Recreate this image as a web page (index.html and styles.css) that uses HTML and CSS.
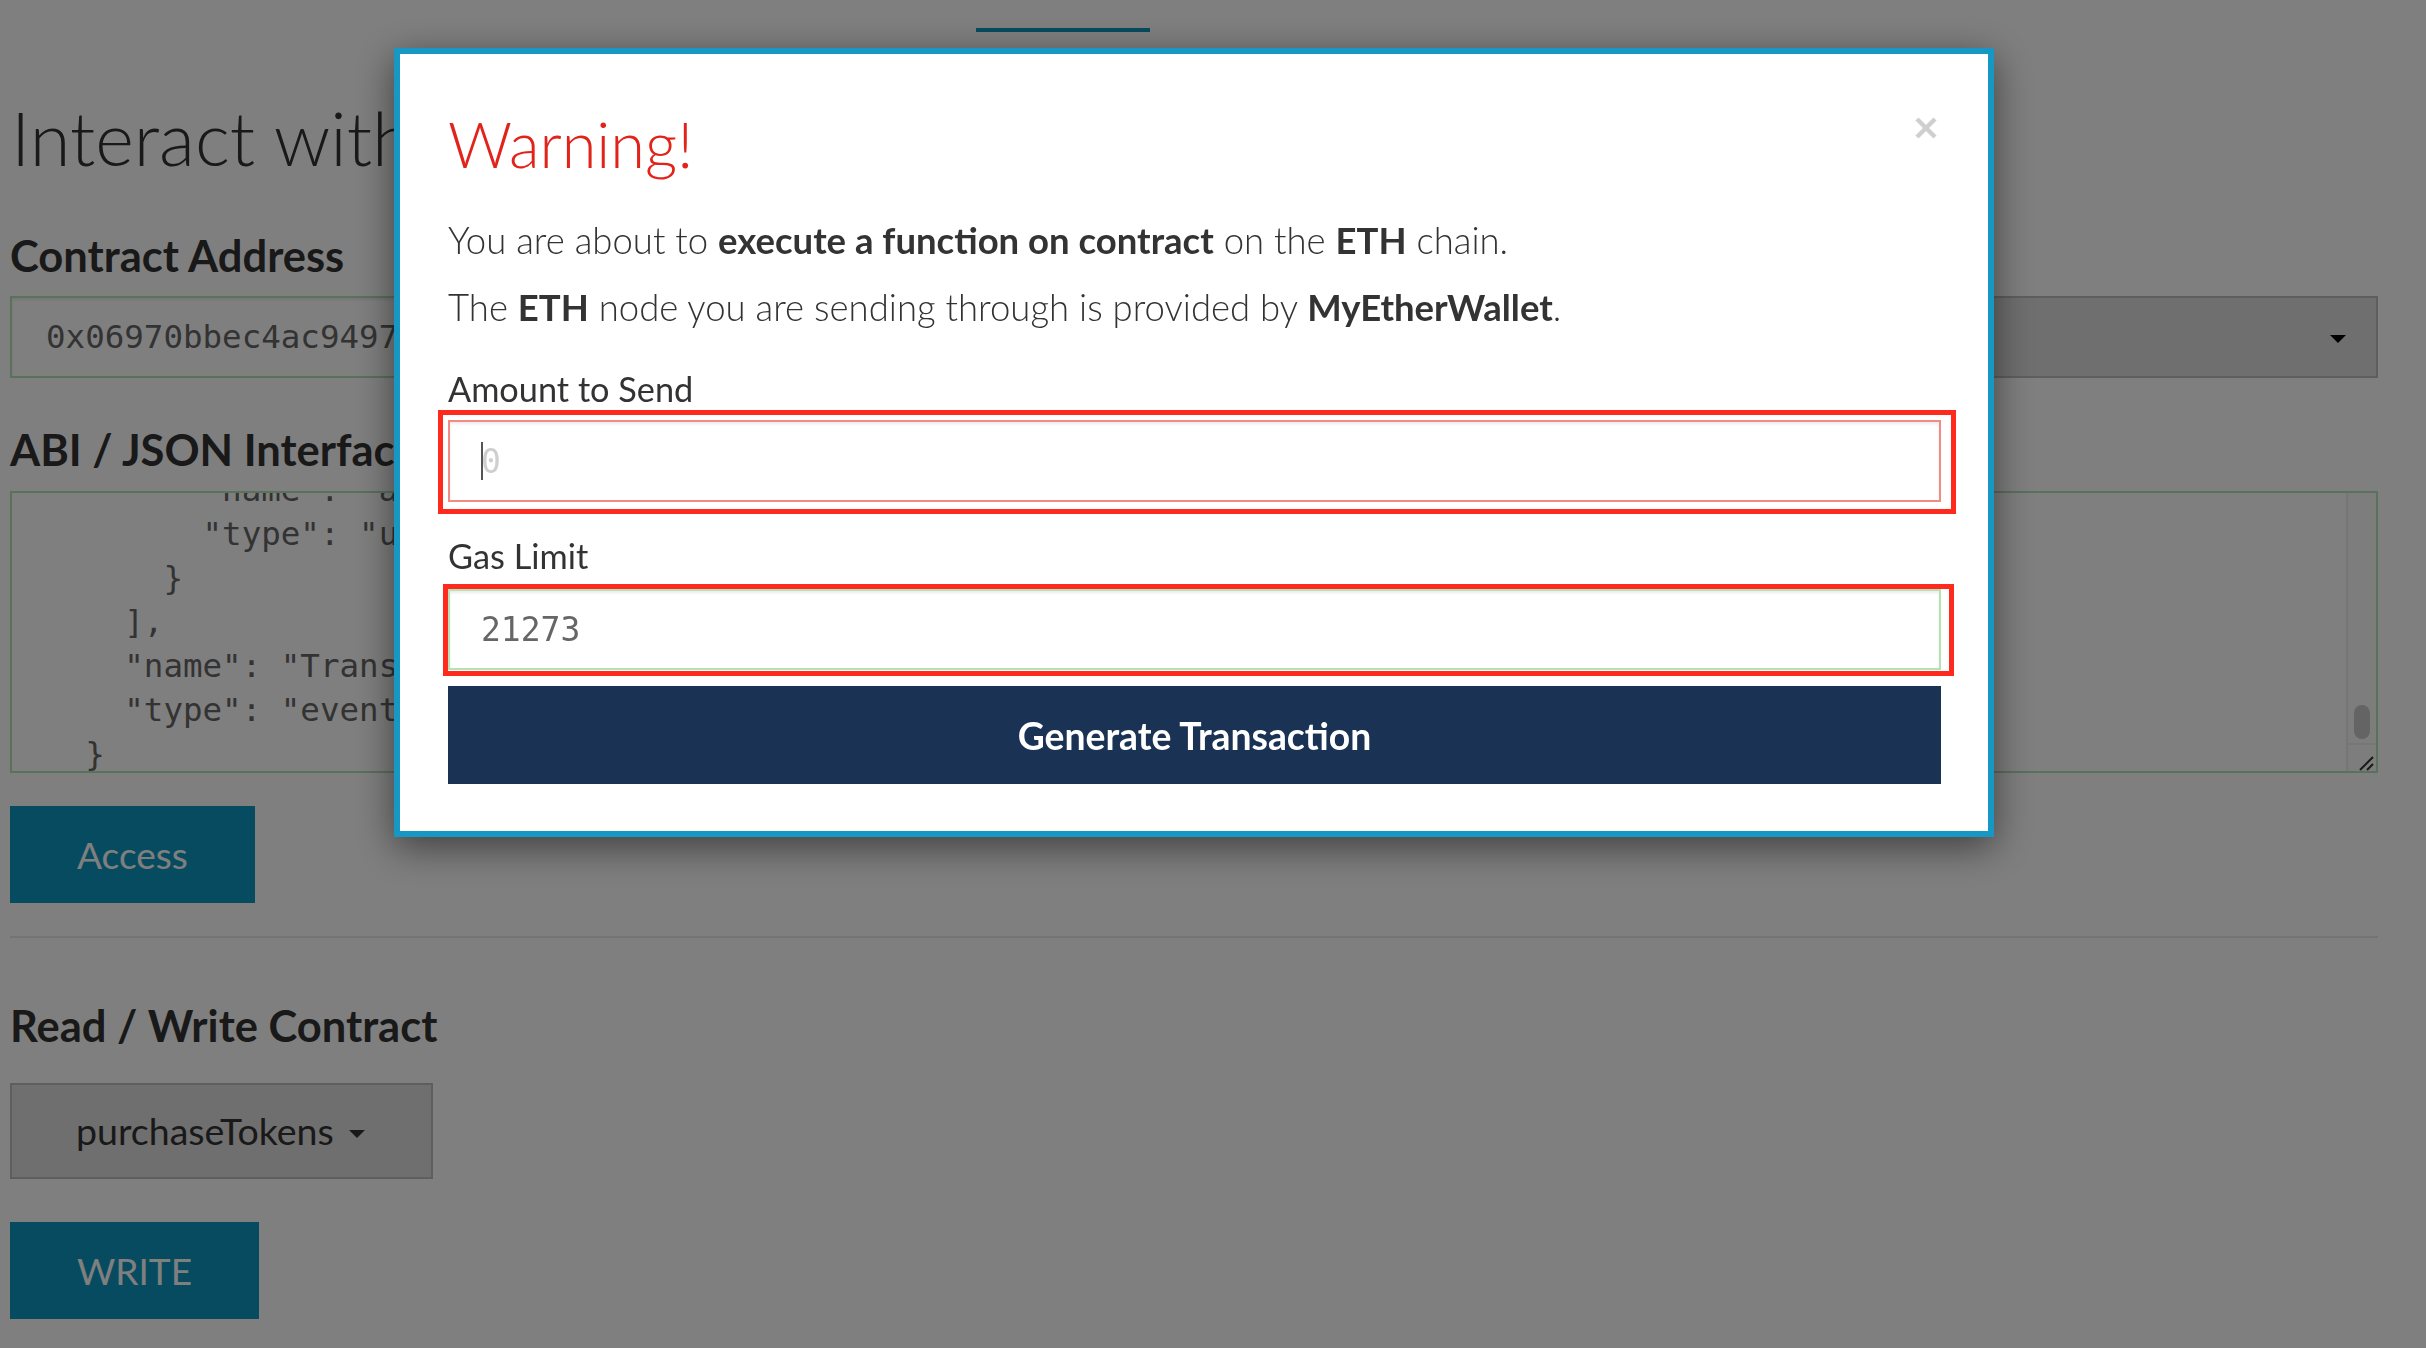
FILE: index.html
```html
<!DOCTYPE html>
<html lang="en">
<head>
<meta charset="utf-8">
<title>Interact with Contract</title>
<link rel="stylesheet" href="styles.css">
</head>
<body>
<div class="page">
  <nav class="tabs" aria-label="Sections"><span class="tab-active"></span></nav>
  <main class="content">
    <h1 class="page-title">Interact with Contract</h1>

    <h3 class="section-label label-address">Contract Address</h3>
    <div class="address-row">
      <input class="field field-page" value="0x06970bbec4ac94978dd05af5d6e5d2f82d5ac09f" readonly>
      <div class="select-box"><span class="select-caret"></span></div>
    </div>

    <h3 class="section-label label-abi">ABI / JSON Interface</h3>
    <div class="code-area">
      <div class="code-view">
<pre class="code">        "name": "amount",
        "type": "uint256"
      }
    ],
    "name": "Transfer",
    "type": "event"
  }
]</pre>
      </div>
      <div class="scroll-col">
        <div class="scroll-rail"><span class="scroll-thumb"></span></div>
        <div class="scroll-corner">
          <svg width="28" height="28" viewBox="0 0 28 28"><path d="M12 25 L25 12 M19 25 L25 19" stroke="#333" stroke-width="2" fill="none"/></svg>
        </div>
      </div>
    </div>

    <button class="btn-primary btn-access">Access</button>
    <hr class="divider">

    <h3 class="section-label label-rw">Read / Write Contract</h3>
    <div class="dropdown">purchaseTokens<span class="dropdown-caret"></span></div>
    <button class="btn-primary btn-write">WRITE</button>
  </main>
</div>

<div class="backdrop"></div>

<div class="modal" role="dialog" aria-labelledby="modal-title">
  <div class="modal-head">
    <h2 class="modal-title" id="modal-title">Warning!</h2>
    <button class="close" aria-label="Close">
      <svg width="22" height="22" viewBox="0 0 22 22"><path d="M2 2 L20 20 M20 2 L2 20" stroke="#cfcfcf" stroke-width="4.4" fill="none"/></svg>
    </button>
  </div>
  <p class="modal-text text-first">You are about to <strong>execute a function on contract</strong> on the <strong>ETH</strong> chain.</p>
  <p class="modal-text text-second">The <strong>ETH</strong> node you are sending through is provided by <strong>MyEtherWallet</strong>.</p>

  <label class="modal-label label-amount" for="amount">Amount to Send</label>
  <div class="annotated">
    <input id="amount" class="field field-error" placeholder="0">
    <span class="text-caret"></span>
    <span class="mark mark-amount"></span>
  </div>

  <label class="modal-label label-gas" for="gas">Gas Limit</label>
  <div class="annotated">
    <input id="gas" class="field field-valid field-gas" value="21273">
    <span class="mark mark-gas"></span>
  </div>

  <button class="btn-generate">Generate Transaction</button>
</div>
</body>
</html>
```

FILE: styles.css
```css
* { box-sizing: border-box; }

html, body {
  margin: 0;
  padding: 0;
}

body {
  width: 2426px;
  height: 1348px;
  overflow: hidden;
  background: #fff;
  color: #333;
  font-family: "Lato", "Noto Sans", "DejaVu Sans", sans-serif;
}

.page {
  padding: 0 48px 0 10px;
}

/* top tabs (scrolled mostly out of view) */
.tabs {
  height: 32px;
  display: flex;
  align-items: flex-end;
  padding-left: 966px;
}

.tab-active {
  width: 174px;
  height: 4px;
  background: #0e97c0;
}

.page-title {
  margin: 62px 0 0 1px;
  font-weight: 300;
  font-size: 74px;
  line-height: 1.2;
  color: #333;
}

.section-label {
  margin: 0;
  font-weight: 700;
  font-size: 43.5px;
  line-height: 1.2;
  color: #333;
}

.label-address { margin-top: 46.3px; }
.label-abi { margin-top: 45.1px; }
.label-rw { margin-top: 61px; }

.address-row {
  display: grid;
  grid-template-columns: 1fr 1fr;
  gap: 30px;
  margin-top: 14.7px;
  height: 82px;
}

.field {
  display: block;
  width: 100%;
  height: 82px;
  margin: 0;
  padding: 0 0 0 31px;
  border: 2px solid #b5e2b5;
  background: #fff;
  color: #666;
  font-family: "DejaVu Sans Mono", "Liberation Mono", monospace;
  font-size: 33px;
  outline: none;
  box-shadow: inset 0 2px 3px rgba(0, 0, 0, 0.08);
}

.field::placeholder { color: #cfcfcf; }

.field-page {
  padding-left: 34px;
  font-size: 32.5px;
}

.select-box {
  display: flex;
  align-items: center;
  justify-content: flex-end;
  padding-right: 30px;
  border: 2px solid #bdbdbd;
  background: #dedede;
}

.select-caret {
  width: 0;
  height: 0;
  margin-top: 4px;
  border-top: 8px solid #000;
  border-left: 8px solid transparent;
  border-right: 8px solid transparent;
}

/* ABI textarea */
.code-area {
  display: flex;
  margin-top: 15.7px;
  height: 282px;
  border: 2px solid #b5e2b5;
  background: #fff;
  overflow: hidden;
}

.code-view {
  flex: 1;
  overflow: hidden;
  padding-left: 34px;
}

.code {
  margin: -25px 0 0;
  font-family: "DejaVu Sans Mono", "Liberation Mono", monospace;
  font-size: 32.5px;
  line-height: 44px;
  color: #666;
}

.scroll-col {
  width: 30px;
  display: flex;
  flex-direction: column;
  border-left: 2px solid #ececec;
  background: #fafafa;
}

.scroll-rail {
  flex: 1;
  display: flex;
  flex-direction: column;
  justify-content: flex-end;
  align-items: center;
  padding-bottom: 4px;
}

.scroll-thumb {
  width: 16px;
  height: 34px;
  border-radius: 8px;
  background: #c8c8c8;
}

.scroll-corner {
  height: 28px;
  border-top: 2px solid #ececec;
}

.scroll-corner svg { display: block; }

.btn-primary {
  display: block;
  height: 97px;
  margin: 0;
  padding: 0 67px;
  border: 0;
  background: #0e97c0;
  color: #fff;
  font-family: "Lato", sans-serif;
  font-weight: 400;
  font-size: 37px;
}

.btn-access { margin-top: 33px; }
.btn-write { margin-top: 43px; }

.divider {
  margin: 33px 0 0;
  border: 0;
  border-top: 2px solid #e8e8e8;
}

.dropdown {
  display: inline-flex;
  align-items: center;
  gap: 15px;
  margin-top: 31.7px;
  height: 96px;
  padding: 0 66px 0 64px;
  border: 2px solid #bdbdbd;
  background: #dedede;
  color: #333;
  font-size: 37.5px;
}

.dropdown-caret {
  width: 0;
  height: 0;
  margin-top: 6px;
  border-top: 8px solid #333;
  border-left: 8px solid transparent;
  border-right: 8px solid transparent;
}

/* overlay + modal */
.backdrop {
  position: fixed;
  inset: 0;
  background: rgba(0, 0, 0, 0.5);
}

.modal {
  position: fixed;
  left: 394px;
  top: 48px;
  width: 1600px;
  padding: 52px 47px 47px 48px;
  border: 6px solid #1798c4;
  background: #fff;
  box-shadow: 0 10px 36px rgba(0, 0, 0, 0.5);
}

.modal-head {
  display: flex;
  justify-content: space-between;
  align-items: flex-start;
}

.modal-title {
  margin: 0;
  font-weight: 300;
  font-size: 63px;
  line-height: 1.2;
  color: #e2231a;
}

.close {
  margin: 11px 4px 0 0;
  padding: 0;
  border: 0;
  background: none;
  line-height: 0;
}

.modal-text {
  margin: 0;
  font-weight: 300;
  font-size: 36.5px;
  line-height: 1.2;
  color: #333;
}

.modal-text strong { font-weight: 700; }

.text-first { margin-top: 37.4px; }
.text-second { margin-top: 23.2px; }

.modal-label {
  display: block;
  font-weight: 400;
  font-size: 34.3px;
  line-height: 1.2;
  color: #333;
}

.label-amount { margin: 38.4px 0 10.7px; }
.label-gas { margin: 33.2px 0 12.7px; }

.annotated {
  position: relative;
}

.field-error {
  border-color: #f28b84;
}

.field-gas {
  height: 81px;
}

.text-caret {
  position: absolute;
  left: 33px;
  top: 22px;
  width: 2px;
  height: 38px;
  background: #555;
}

.mark {
  position: absolute;
  border: 5px solid #ff2a1e;
  pointer-events: none;
}

.mark-amount {
  top: -10px;
  left: -10px;
  right: -15px;
  bottom: -12px;
}

.mark-gas {
  top: -5px;
  left: -5px;
  right: -13px;
  bottom: -6px;
}

.btn-generate {
  display: block;
  width: 100%;
  height: 98px;
  margin-top: 16px;
  padding: 0;
  border: 0;
  background: #1a3254;
  color: #fff;
  font-family: "Lato", sans-serif;
  font-weight: 700;
  font-size: 37.3px;
}
```
